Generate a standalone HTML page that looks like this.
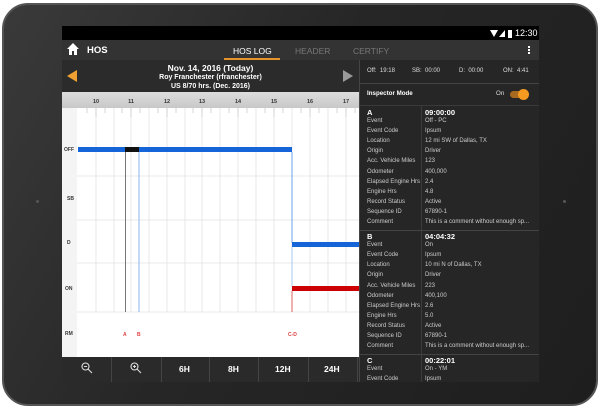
<!DOCTYPE html>
<html><head><style>
*{margin:0;padding:0;box-sizing:border-box}
body{width:600px;height:409px;background:#fff;position:relative;overflow:hidden;font-family:"Liberation Sans",sans-serif}
.tab{position:absolute;left:2px;top:3px;width:596px;height:403px;border-radius:26px;background:linear-gradient(120deg,#3a3a3a 0%,#262626 45%,#1e1e1e 100%);border:2px solid #555}
.scr{position:absolute;left:62px;top:26px;width:477px;height:356px;background:#222;overflow:hidden}
.a{position:absolute}
.t{position:absolute;white-space:nowrap}
</style></head><body>
<div class="tab"></div>
<div class="a" style="left:36px;top:200px;width:3px;height:3px;border-radius:2px;background:#555"></div>
<div class="a" style="left:563px;top:200px;width:3px;height:3px;border-radius:2px;background:#555"></div>
<div class="scr">
 <div class="a" style="left:0;top:0;width:477px;height:14px;background:#000"></div>
 <svg class="a" style="left:428px;top:3px" width="22" height="9"><polygon points="0,1 8,1 4,8" fill="#fff"/><polygon points="9,8 15,1 15,8" fill="#fff"/><rect x="18" y="1" width="4" height="8" fill="#fff"/></svg>
 <div class="t" style="left:453px;top:2px;color:#fff;font-size:9px">12:30</div>
 <div class="a" style="left:0;top:14px;width:477px;height:20px;background:#333"></div>
 <svg class="a" style="left:5px;top:17px" width="12" height="12"><path d="M6 0 L0 6 H2 V12 H5 V8 H7 V12 H10 V6 H12 Z" fill="#fff"/></svg>
 <div class="t" style="left:25px;top:19px;color:#fff;font-size:9.5px;font-weight:bold">HOS</div>
 <div class="t" style="left:171px;top:20px;color:#fff;font-size:8.5px">HOS LOG</div>
 <div class="a" style="left:162px;top:32px;width:56px;height:2px;background:#e8942a"></div>
 <div class="t" style="left:233px;top:20px;color:#777;font-size:8.5px">HEADER</div>
 <div class="t" style="left:291px;top:20px;color:#777;font-size:8.5px">CERTIFY</div>
 <div class="a" style="left:466px;top:20px;width:2px;height:2px;background:#fff;box-shadow:0 3px #fff,0 6px #fff"></div>
 <div class="a" style="left:0;top:34px;width:297px;height:32px;background:#2b2b2b"></div>
 <div class="t" style="left:0;width:297px;text-align:center;top:37px;color:#fff;font-size:8.5px;font-weight:bold">Nov. 14, 2016 (Today)</div>
 <div class="t" style="left:0;width:297px;text-align:center;top:48px;color:#fff;font-size:7px;font-weight:bold">Roy Franchester (rfranchester)</div>
 <div class="t" style="left:0;width:297px;text-align:center;top:57px;color:#fff;font-size:7px;font-weight:bold">US 8/70 hrs. (Dec. 2016)</div>
 <svg class="a" style="left:5px;top:44px" width="10" height="12"><polygon points="10,0 10,12 0,6" fill="#f0a030"/></svg>
 <svg class="a" style="left:281px;top:44px" width="10" height="12"><polygon points="0,0 0,12 10,6" fill="#999"/></svg>
 <div class="a" style="left:0;top:66px;width:297px;height:265px;background:#fff"></div>
 <div class="a" style="left:0;top:66px;width:297px;height:16px;background:linear-gradient(#ddd,#c8c8c8)"></div>
 <div class="a" style="left:0;top:82px;width:15px;height:249px;background:#f4f4f4"></div>
 <svg class="a" style="left:0;top:66px" width="297" height="265" font-family="Liberation Sans" font-size="5.5" font-weight="bold">
  <g fill="#333" text-anchor="middle">
   <text x="34" y="11">10</text><text x="69" y="11">11</text><text x="105" y="11">12</text><text x="140" y="11">13</text><text x="176" y="11">14</text><text x="212" y="11">15</text><text x="248" y="11">16</text><text x="284" y="11">17</text>
  </g>
  <g stroke="#e2e2e2" stroke-width="0.8">
   <line x1="34" y1="16" x2="34" y2="220"/><line x1="69" y1="16" x2="69" y2="220"/><line x1="105" y1="16" x2="105" y2="220"/><line x1="140" y1="16" x2="140" y2="220"/><line x1="176" y1="16" x2="176" y2="220"/><line x1="212" y1="16" x2="212" y2="220"/><line x1="248" y1="16" x2="248" y2="220"/><line x1="284" y1="16" x2="284" y2="220"/>
   <line x1="52" y1="16" x2="52" y2="220"/><line x1="87" y1="16" x2="87" y2="220"/><line x1="123" y1="16" x2="123" y2="220"/><line x1="158" y1="16" x2="158" y2="220"/><line x1="194" y1="16" x2="194" y2="220"/><line x1="230" y1="16" x2="230" y2="220"/><line x1="266" y1="16" x2="266" y2="220"/>
   <line x1="15" y1="84" x2="297" y2="84"/><line x1="15" y1="128" x2="297" y2="128"/><line x1="15" y1="171" x2="297" y2="171"/><line x1="15" y1="220" x2="297" y2="220"/>
  </g>
  <g stroke="#ccc" stroke-width="0.8">
   <path d="M25 16v5M34 16v9M43 16v5M60 16v5M69 16v9M78 16v5M96 16v5M105 16v9M114 16v5M131 16v5M140 16v9M149 16v5M167 16v5M176 16v9M185 16v5M203 16v5M212 16v9M221 16v5M239 16v5M248 16v9M257 16v5M275 16v5M284 16v9M293 16v5"/>
  </g>
  <g fill="#333" font-size="5">
   <text x="2" y="59">OFF</text><text x="5" y="108">SB</text><text x="5" y="152">D</text><text x="3" y="198">ON</text><text x="3" y="243">RM</text>
  </g>
  <rect x="16" y="55" width="214" height="5" fill="#1565d8"/>
  <rect x="63" y="55" width="14" height="5" fill="#111"/>
  <line x1="63.5" y1="60" x2="63.5" y2="220" stroke="#555" stroke-width="0.8"/>
  <line x1="77" y1="60" x2="77" y2="220" stroke="#9cc0f0" stroke-width="1.2"/>
  <line x1="230" y1="60" x2="230" y2="151" stroke="#6aa0e8" stroke-width="1"/>
  <rect x="230" y="150" width="67" height="5" fill="#1565d8"/>
  <line x1="230" y1="155" x2="230" y2="194" stroke="#a8c8f0" stroke-width="1"/>
  <rect x="230" y="194" width="67" height="5" fill="#cc0000"/>
  <line x1="230" y1="199" x2="230" y2="220" stroke="#e06060" stroke-width="1"/>
  <g fill="#e04040" font-size="5">
   <text x="61" y="244">A</text><text x="75" y="244">B</text><text x="226" y="244">C-D</text>
  </g>
 </svg>
 <div class="a" style="left:0;top:331px;width:297px;height:25px;background:#2a2a2a"></div>
 <div class="a" style="left:49px;top:331px;width:1px;height:25px;background:#444;box-shadow:50px 0 #444,98px 0 #444,147px 0 #444,197px 0 #444,246px 0 #444"></div>
 <svg class="a" style="left:19px;top:336px" width="12" height="12"><circle cx="4.5" cy="4.5" r="3.5" fill="none" stroke="#ddd" stroke-width="1.1"/><path d="M7 7l4 4M3 4.5h3" stroke="#ddd" stroke-width="1.1"/></svg>
 <svg class="a" style="left:68px;top:336px" width="12" height="12"><circle cx="4.5" cy="4.5" r="3.5" fill="none" stroke="#ddd" stroke-width="1.1"/><path d="M7 7l4 4M3 4.5h3M4.5 3v3" stroke="#ddd" stroke-width="1.1"/></svg>
 <div class="t" style="left:117px;top:338px;color:#fff;font-size:8.5px;font-weight:bold">6H</div>
 <div class="t" style="left:166px;top:338px;color:#fff;font-size:8.5px;font-weight:bold">8H</div>
 <div class="t" style="left:213px;top:338px;color:#fff;font-size:8.5px;font-weight:bold">12H</div>
 <div class="t" style="left:262px;top:338px;color:#fff;font-size:8.5px;font-weight:bold">24H</div>
 <div class="a" style="left:297px;top:34px;width:180px;height:322px;background:#262626;border-left:1px solid #444"></div>
 <div class="a" style="left:298px;top:57px;width:179px;height:1px;background:#444"></div>
 <div class="t" style="left:305px;top:42px;color:#ddd;font-size:6px">Off:&nbsp; 19:18</div>
 <div class="t" style="left:350px;top:42px;color:#ddd;font-size:6px">SB:&nbsp; 00:00</div>
 <div class="t" style="left:397px;top:42px;color:#ddd;font-size:6px">D:&nbsp; 00:00</div>
 <div class="t" style="left:441px;top:42px;color:#ddd;font-size:6px">ON:&nbsp; 4:41</div>
 <div class="t" style="left:305px;top:64px;color:#fff;font-size:6.2px;font-weight:bold">Inspector Mode</div>
 <div class="t" style="left:434px;top:64px;color:#ddd;font-size:6.2px">On</div>
 <div class="a" style="left:448px;top:65px;width:16px;height:7px;border-radius:4px;background:#a86a20"></div>
 <div class="a" style="left:456px;top:63px;width:11px;height:11px;border-radius:6px;background:#f59a20"></div>
 <div class="a" style="left:298px;top:79px;width:179px;height:1px;background:#3a3a3a"></div>
 <div class="a" style="left:359px;top:80px;width:1px;height:276px;background:#3c3c3c"></div>
 <div id="ev" class="a" style="left:298px;top:80px;width:179px;font-size:6px;color:#ccc"></div>
</div>
<script>
var E=[["A","09:00:00",[["Event","Off - PC"],["Event Code","Ipsum"],["Location","12 mi SW of Dallas, TX"],["Origin","Driver"],["Acc. Vehicle Miles","123"],["Odometer","400,000"],["Elapsed Engine Hrs","2.4"],["Engine Hrs","4.8"],["Record Status","Active"],["Sequence ID","67890-1"],["Comment","This is a comment without enough sp..."]]],
["B","04:04:32",[["Event","On"],["Event Code","Ipsum"],["Location","10 mi N of Dallas, TX"],["Origin","Driver"],["Acc. Vehicle Miles","223"],["Odometer","400,100"],["Elapsed Engine Hrs","2.6"],["Engine Hrs","5.0"],["Record Status","Active"],["Sequence ID","67890-1"],["Comment","This is a comment without enough sp..."]]],
["C","00:22:01",[["Event","On - YM"],["Event Code","Ipsum"]]]];
var h="",y=2;
E.forEach(function(e,i){
 if(i>0){h+='<div style="position:absolute;left:0;top:'+(y-2)+'px;width:179px;height:1px;background:#444"></div>';}
 h+='<div style="position:absolute;left:7px;top:'+y+'px;color:#fff;font-weight:bold;font-size:7.5px">'+e[0]+'</div><div style="position:absolute;left:65px;top:'+y+'px;color:#fff;font-weight:bold;font-size:7.5px">'+e[1]+'</div>';
 y+=10;
 e[2].forEach(function(r){h+='<div style="position:absolute;left:7px;top:'+y+'px;white-space:nowrap">'+r[0]+'</div><div style="position:absolute;left:65px;top:'+y+'px;white-space:nowrap">'+r[1]+'</div>';y+=10.1;});
 y+=3;
});
document.getElementById("ev").innerHTML=h;
</script>
</body></html>
